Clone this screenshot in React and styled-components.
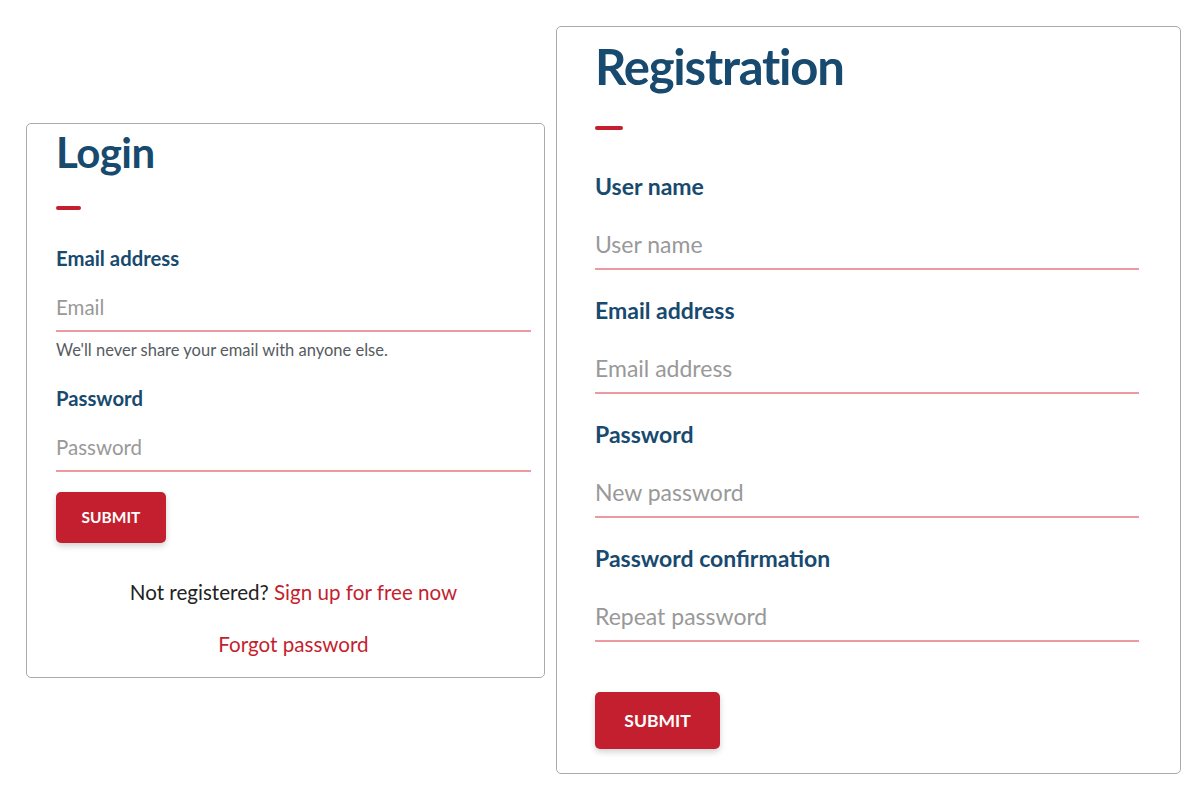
import React from "react";
import styled, { createGlobalStyle } from "styled-components";

const GlobalStyle = createGlobalStyle`
  html, body {
    margin: 0;
    padding: 0;
    background: #ffffff;
    font-family: Lato, "Noto Sans", sans-serif;
  }
`;

const Page = styled.div`
  display: flex;
  align-items: center;
  height: 800px;
  padding-left: 26px;
  gap: 11px;
  box-sizing: border-box;
`;

const Card = styled.form`
  box-sizing: border-box;
  width: ${(p) => (p.$wide ? "625px" : "519px")};
  padding: ${(p) => (p.$wide ? "9px 41px 24px 38px" : "3px 13px 21px 29px")};
  border: 1px solid #ababab;
  border-radius: 5px;
  display: flex;
  flex-direction: column;
`;

const Title = styled.h1`
  margin: 0;
  color: #174a6e;
  font-weight: 700;
  font-size: ${(p) => (p.$big ? "49px" : "42px")};
  line-height: ${(p) => (p.$big ? "60px" : "50px")};
  letter-spacing: ${(p) => (p.$big ? "-1.2px" : "-0.5px")};
`;

const Dash = styled.span`
  display: block;
  width: ${(p) => (p.$big ? "28px" : "25px")};
  height: 4px;
  border-radius: 2px;
  background: #c41f2f;
  margin: ${(p) => (p.$big ? "30px 0 44px" : "29px 0 36px")};
`;

const Field = styled.div`
  display: flex;
  flex-direction: column;
  margin-bottom: ${(p) => p.$gap || "0px"};
`;

const Label = styled.label`
  color: #174a6e;
  font-weight: 700;
  font-size: ${(p) => (p.$big ? "23px" : "20.3px")};
  line-height: 24px;
  margin-top: ${(p) => p.$top || "0px"};
`;

const Input = styled.input`
  box-sizing: border-box;
  border: none;
  border-bottom: 2px solid #ec9aa0;
  border-radius: 0;
  outline: none;
  background: transparent;
  font-family: inherit;
  font-size: ${(p) => (p.$big ? "23px" : "20.5px")};
  color: #333;
  padding: 0;
  margin-top: ${(p) => (p.$big ? "21px" : "15px")};
  height: ${(p) => (p.$big ? "51px" : "47px")};
  &::placeholder {
    color: #999999;
  }
`;

const Help = styled.small`
  color: #555b60;
  font-size: 16.5px;
  line-height: 20px;
  margin-top: 8px;
`;

const Submit = styled.button`
  align-self: flex-start;
  border: none;
  border-radius: 5px;
  background: #c41f2f;
  color: #ffffff;
  font-family: inherit;
  font-weight: 700;
  font-size: ${(p) => (p.$big ? "17.5px" : "15.5px")};
  width: ${(p) => (p.$big ? "125px" : "110px")};
  height: ${(p) => (p.$big ? "57px" : "51px")};
  box-shadow: 0 3px 6px rgba(0, 0, 0, 0.18);
  cursor: pointer;
  margin-top: ${(p) => p.$top};
`;

const Note = styled.p`
  margin: ${(p) => p.$margin};
  text-align: center;
  font-size: 20.6px;
  line-height: 24px;
  color: #222;
`;

const Link = styled.a`
  color: #c41f2f;
  text-decoration: none;
`;

const LoginCard = () => (
  <Card>
    <Title>Login</Title>
    <Dash />
    <Field>
      <Label>Email address</Label>
      <Input type="email" placeholder="Email" />
      <Help>We'll never share your email with anyone else.</Help>
    </Field>
    <Field>
      <Label $top="26px">Password</Label>
      <Input type="password" placeholder="Password" />
    </Field>
    <Submit type="button" $top="20px">SUBMIT</Submit>
    <Note $margin="37px 0 0">
      Not registered? <Link href="#">Sign up for free now</Link>
    </Note>
    <Note $margin="28px 0 0">
      <Link href="#">Forgot password</Link>
    </Note>
  </Card>
);

const regFields = [
  ["User name", "User name", "text"],
  ["Email address", "Email address", "email"],
  ["Password", "New password", "password"],
  ["Password confirmation", "Repeat password", "password"],
];

const RegistrationCard = () => (
  <Card $wide>
    <Title $big>Registration</Title>
    <Dash $big />
    {regFields.map(([label, ph, type], i) => (
      <Field key={label} $gap={i < regFields.length - 1 ? "28px" : "0px"}>
        <Label $big>{label}</Label>
        <Input $big type={type} placeholder={ph} />
      </Field>
    ))}
    <Submit type="button" $big $top="50px">SUBMIT</Submit>
  </Card>
);

export default function App() {
  return (
    <>
      <GlobalStyle />
      <Page>
        <LoginCard />
        <RegistrationCard />
      </Page>
    </>
  );
}
